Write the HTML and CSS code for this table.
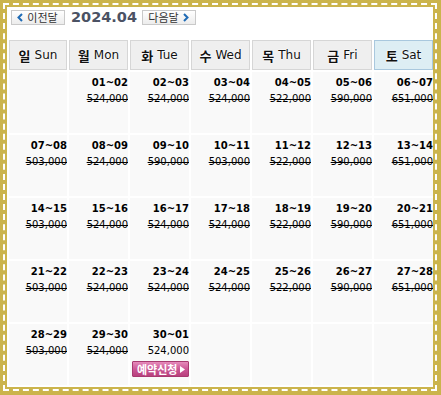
FILE: index.html
```html
<!DOCTYPE html>
<html lang="ko">
<head>
<meta charset="utf-8">
<link rel="stylesheet" href="styles.css">
</head>
<body>
<div class="frame">
  <div class="frame-dash">
    <div class="frame-inner">
      <div class="topbar">
        <button class="nav-btn"><svg class="chev" width="6" height="9" viewBox="0 0 6 9"><polyline points="5,1 1.5,4.5 5,8" fill="none" stroke="#1f6bb5" stroke-width="2"/></svg><span>이전달</span></button>
        <span class="title">2024.04</span>
        <button class="nav-btn"><span>다음달</span><svg class="chev" width="6" height="9" viewBox="0 0 6 9"><polyline points="1,1 4.5,4.5 1,8" fill="none" stroke="#1f6bb5" stroke-width="2"/></svg></button>
      </div>
      <div class="cal">
        <div class="dh"><b>일</b> Sun</div>
        <div class="dh"><b>월</b> Mon</div>
        <div class="dh"><b>화</b> Tue</div>
        <div class="dh"><b>수</b> Wed</div>
        <div class="dh"><b>목</b> Thu</div>
        <div class="dh"><b>금</b> Fri</div>
        <div class="dh sat"><b>토</b> Sat</div>

        <div class="cell"></div>
        <div class="cell"><div class="d">01~02</div><div class="p">524,000</div></div>
        <div class="cell"><div class="d">02~03</div><div class="p">524,000</div></div>
        <div class="cell"><div class="d">03~04</div><div class="p">524,000</div></div>
        <div class="cell"><div class="d">04~05</div><div class="p">522,000</div></div>
        <div class="cell"><div class="d">05~06</div><div class="p">590,000</div></div>
        <div class="cell"><div class="d">06~07</div><div class="p">651,000</div></div>

        <div class="cell"><div class="d">07~08</div><div class="p">503,000</div></div>
        <div class="cell"><div class="d">08~09</div><div class="p">524,000</div></div>
        <div class="cell"><div class="d">09~10</div><div class="p">590,000</div></div>
        <div class="cell"><div class="d">10~11</div><div class="p">503,000</div></div>
        <div class="cell"><div class="d">11~12</div><div class="p">522,000</div></div>
        <div class="cell"><div class="d">12~13</div><div class="p">590,000</div></div>
        <div class="cell"><div class="d">13~14</div><div class="p">651,000</div></div>

        <div class="cell"><div class="d">14~15</div><div class="p">503,000</div></div>
        <div class="cell"><div class="d">15~16</div><div class="p">524,000</div></div>
        <div class="cell"><div class="d">16~17</div><div class="p">524,000</div></div>
        <div class="cell"><div class="d">17~18</div><div class="p">524,000</div></div>
        <div class="cell"><div class="d">18~19</div><div class="p">522,000</div></div>
        <div class="cell"><div class="d">19~20</div><div class="p">590,000</div></div>
        <div class="cell"><div class="d">20~21</div><div class="p">651,000</div></div>

        <div class="cell"><div class="d">21~22</div><div class="p">503,000</div></div>
        <div class="cell"><div class="d">22~23</div><div class="p">524,000</div></div>
        <div class="cell"><div class="d">23~24</div><div class="p">524,000</div></div>
        <div class="cell"><div class="d">24~25</div><div class="p">524,000</div></div>
        <div class="cell"><div class="d">25~26</div><div class="p">522,000</div></div>
        <div class="cell"><div class="d">26~27</div><div class="p">590,000</div></div>
        <div class="cell"><div class="d">27~28</div><div class="p">651,000</div></div>

        <div class="cell"><div class="d">28~29</div><div class="p">503,000</div></div>
        <div class="cell"><div class="d">29~30</div><div class="p">524,000</div></div>
        <div class="cell"><div class="d">30~01</div><div class="p avail">524,000</div><button class="book">예약신청<svg width="5" height="7" viewBox="0 0 5 7"><polygon points="0,0 5,3.5 0,7" fill="#fff"/></svg></button></div>
        <div class="cell"></div>
        <div class="cell"></div>
        <div class="cell"></div>
        <div class="cell"></div>
      </div>
    </div>
  </div>
</div>
</body>
</html>
```

FILE: styles.css
```css
html, body {
  margin: 0;
  padding: 0;
  background: #fff;
}
.frame {
  width: 441px;
  height: 395px;
  box-sizing: border-box;
  background: #cbb44c;
  padding: 3px 4px 4px 3px;
}
.frame-dash {
  height: 100%;
  box-sizing: border-box;
  border: 2px dashed #fff;
}
.frame-inner {
  height: 100%;
  box-sizing: border-box;
  border: 2px solid #cbb44c;
  background: #fff;
  overflow: hidden;
}
.topbar {
  display: flex;
  align-items: center;
  padding: 3px 0 0 4px;
  height: 15px;
}
.nav-btn {
  display: flex;
  align-items: center;
  gap: 4px;
  height: 15px;
  box-sizing: border-box;
  margin: 0;
  padding: 0 6px 0 5px;
  border: 1px solid #c9c9c9;
  background: linear-gradient(#ffffff, #ececec);
  font-family: "Noto Sans CJK KR", sans-serif;
  font-size: 11px;
  line-height: 13px;
  color: #333;
  width: 54px;
  justify-content: center;
}
.chev { display: block; }
.title {
  font-family: "DejaVu Sans", sans-serif;
  font-weight: bold;
  font-size: 14.5px;
  color: #4b5264;
  margin: 0 5px 0 6px;
  line-height: 15px;
}
.cal {
  display: grid;
  grid-template-columns: 58px repeat(6, 59px);
  grid-template-rows: 30px repeat(5, 61px);
  gap: 2px;
  margin: 15px 0 0 2px;
  width: 424px;
}
.dh {
  box-sizing: border-box;
  border: 1px solid #d6d6d6;
  background: #efefef;
  font-family: "DejaVu Sans", "Noto Sans CJK KR", sans-serif;
  font-size: 12px;
  color: #111;
  display: flex;
  align-items: center;
  justify-content: center;
  text-shadow: 0 0 2px #fff, 0 0 2px #fff;
}
.dh b {
  font-family: "Noto Sans CJK KR", sans-serif;
  font-weight: bold;
  font-size: 13px;
  margin-right: 4px;
}
.dh.sat {
  background: #ddeef4;
  border-color: #a9c8de;
}
.cell {
  background: #f9f9f9;
  padding: 4px 0 0 0;
  font-family: "DejaVu Sans", sans-serif;
  font-size: 10px;
  color: #000;
  display: flex;
  flex-direction: column;
  align-items: flex-end;
}
.d {
  font-weight: bold;
  line-height: 13px;
}
.p {
  line-height: 13px;
  margin-top: 3px;
  text-decoration: line-through;
}
.p.avail { text-decoration: none; }
.book {
  margin: 4px 0 0 0;
  height: 16px;
  width: 57px;
  box-sizing: border-box;
  border: 1px solid #a83a70;
  border-radius: 1px;
  background: linear-gradient(#e58bbb, #cc5896 50%, #b8407c);
  color: #fff;
  font-family: "Noto Sans CJK KR", sans-serif;
  font-weight: bold;
  font-size: 11px;
  line-height: 14px;
  padding: 0 0 0 4px;
  display: flex;
  align-items: center;
  gap: 3px;
}
```
